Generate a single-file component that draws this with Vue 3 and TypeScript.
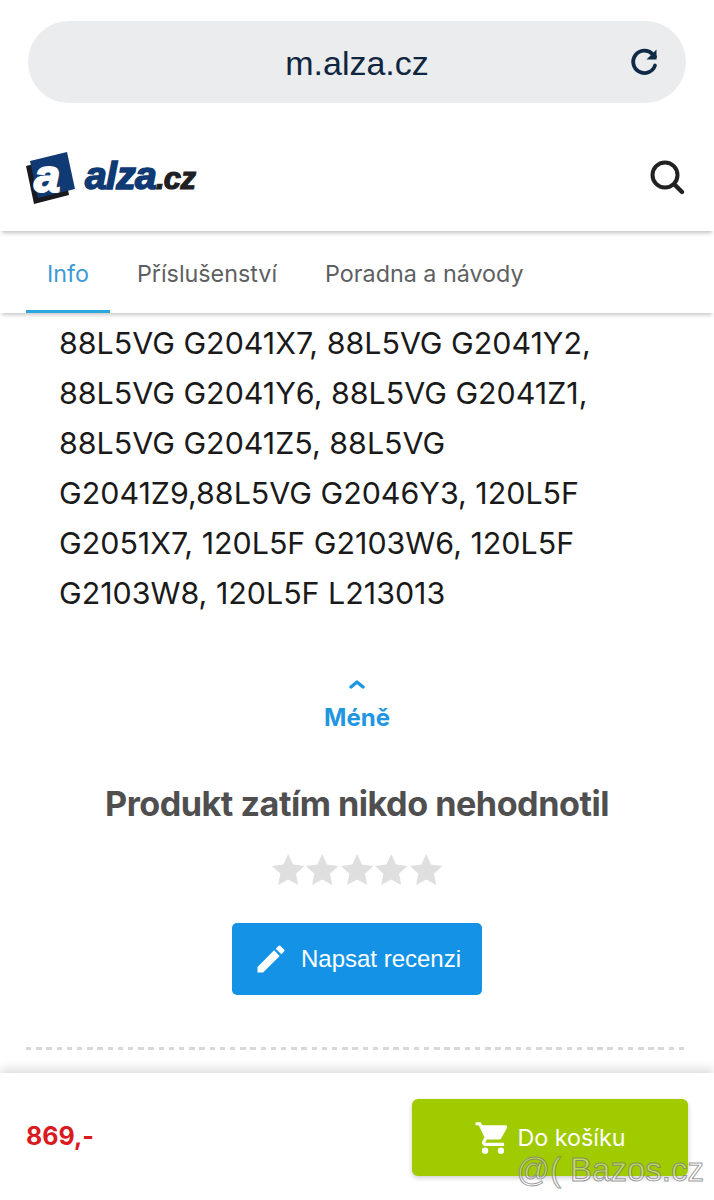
<script setup lang="ts">
const lines = [
  '88L5VG G2041X7, 88L5VG G2041Y2,',
  '88L5VG G2041Y6, 88L5VG G2041Z1,',
  '88L5VG G2041Z5, 88L5VG',
  'G2041Z9,88L5VG G2046Y3, 120L5F',
  'G2051X7, 120L5F G2103W6, 120L5F',
  'G2103W8, 120L5F L213013',
]
const tabs = ['Info', 'Příslušenství', 'Poradna a návody']
const stars = [1, 2, 3, 4, 5]
</script>

<template>
  <div class="page">
    <div class="browser">
      <div class="url-bar">
        <span class="url">m.alza.cz</span>
        <svg class="reload" viewBox="0 0 32 32" width="32" height="32">
          <path d="M26 19.5A11.2 11.2 0 1 1 23.6 8.2L26 10.6" fill="none" stroke="#0f2a47" stroke-width="3.8" stroke-linecap="round" />
          <path d="M27.5 3.5v10h-10z" fill="#0f2a47" />
        </svg>
      </div>
    </div>

    <header class="site-head">
      <div class="logo">
        <svg class="logo-mark" viewBox="0 0 50 52" width="50" height="52">
          <path d="M0 14 36 5 43 43 8 52z" fill="#1a1a1e" />
          <path d="M4 9 41 0 49 37 12 46z" fill="#0f3a74" />
          <text x="8" y="40" class="logo-a">a</text>
        </svg>
        <span class="logo-text">alza<span class="logo-tld">.cz</span></span>
      </div>
      <svg class="search" viewBox="0 0 36 36" width="36" height="36">
        <circle cx="16" cy="16" r="12.5" fill="none" stroke="#222" stroke-width="4" />
        <path d="M25.5 25.5 33 33" stroke="#222" stroke-width="4.4" stroke-linecap="round" />
      </svg>
    </header>

    <nav class="tabs">
      <div v-for="(tab, i) in tabs" :key="tab" class="tab" :class="{ active: i === 0 }">{{ tab }}</div>
    </nav>

    <main class="content">
      <div class="codes">
        <div v-for="line in lines" :key="line">{{ line }}</div>
      </div>

      <div class="less">
        <svg viewBox="0 0 16 10" width="16" height="10">
          <path d="M2 8 8 3l6 5" fill="none" stroke="#1f96e0" stroke-width="3.4" stroke-linecap="round" stroke-linejoin="round" />
        </svg>
        <span>Méně</span>
      </div>

      <h2 class="rating-title">Produkt zatím nikdo nehodnotil</h2>

      <div class="stars">
        <svg v-for="s in stars" :key="s" viewBox="0 0 24 24" width="34.4" height="33">
          <path d="M12 .8l3.5 7.6 8.3 1-6.1 5.7 1.6 8.2-7.3-4.1-7.3 4.1 1.6-8.2L.2 9.4l8.3-1z" fill="#dfdfdf" />
        </svg>
      </div>

      <button class="review-btn">
        <svg viewBox="0 0 24 24" width="36" height="36">
          <path d="M3 17.25V21h3.75L17.81 9.94l-3.75-3.75L3 17.25zM20.71 7.04a1 1 0 0 0 0-1.41l-2.34-2.34a1 1 0 0 0-1.41 0l-1.83 1.83 3.75 3.75 1.83-1.83z" fill="#fff" />
        </svg>
        <span>Napsat recenzi</span>
      </button>

      <div class="dots"></div>
    </main>

    <footer class="buy-bar">
      <span class="price">869,-</span>
      <button class="cart-btn">
        <svg viewBox="0 0 24 24" width="38" height="38">
          <path d="M7 18a2 2 0 1 0 0 4 2 2 0 0 0 0-4zM1 2v2h2l3.6 7.59-1.35 2.45A2 2 0 0 0 7 17h12v-2H7.42a.25.25 0 0 1-.25-.25l.03-.12.9-1.63h7.45c.75 0 1.41-.41 1.75-1.03l3.58-6.49A1 1 0 0 0 20 4H5.21l-.94-2H1zm16 16a2 2 0 1 0 0 4 2 2 0 0 0 0-4z" fill="#fff" />
        </svg>
        <span>Do košíku</span>
      </button>
    </footer>

    <div class="watermark">@( Bazos.cz</div>
  </div>
</template>

<style scoped>
.page {
  position: relative;
  width: 714px;
  height: 1200px;
  overflow: hidden;
  background: #fff;
  display: flex;
  flex-direction: column;
  font-family: Inter, "Liberation Sans", sans-serif;
}

.browser {
  padding: 21px 28px 0;
  height: 131px;
  box-sizing: border-box;
}

.url-bar {
  position: relative;
  height: 82px;
  border-radius: 41px;
  background: #eaecee;
  display: flex;
  align-items: center;
  justify-content: center;
}

.url {
  font-family: "Liberation Sans", Arial, sans-serif;
  font-size: 34px;
  color: #10263f;
  padding-top: 2px;
}

.reload {
  position: absolute;
  right: 25px;
  top: 25px;
}

.site-head {
  height: 100px;
  display: flex;
  align-items: center;
  justify-content: space-between;
  padding: 0 29px 0 26px;
  box-sizing: border-box;
  position: relative;
  z-index: 2;
  background: #fff;
  box-shadow: 0 4px 4px -2px rgba(0, 0, 0, 0.24);
}

.logo {
  display: flex;
  align-items: center;
  gap: 9px;
  margin-top: -7px;
}

.logo-mark {
  overflow: visible;
}

.logo-a {
  font-family: "Liberation Sans", Arial, sans-serif;
  font-weight: 700;
  font-style: italic;
  font-size: 47px;
  fill: #fff;
  stroke: #fff;
  stroke-width: 2px;
}

.logo-text {
  font-family: "Liberation Sans", Arial, sans-serif;
  font-weight: 700;
  font-style: italic;
  font-size: 39px;
  letter-spacing: -0.7px;
  color: #0f3a74;
  -webkit-text-stroke: 1.6px #0f3a74;
  margin-bottom: 3px;
}

.logo-tld {
  font-size: 31px;
  color: #1f2024;
  -webkit-text-stroke: 1.2px #1f2024;
}

.search {
  margin-bottom: 8px;
}

.tabs {
  height: 82px;
  display: flex;
  padding-left: 26px;
  position: relative;
  z-index: 1;
  background: #fff;
  box-shadow: 0 4px 4px -2px rgba(0, 0, 0, 0.22);
}

.tab {
  padding: 0 21px;
  line-height: 85px;
  font-size: 23.3px;
  color: #5d5f61;
  white-space: nowrap;
  box-sizing: border-box;
  height: 82px;
  margin-right: 6px;
}

.tab.active {
  color: #3d9bd6;
  border-bottom: 3px solid #2ba8de;
}

.content {
  flex: 1;
  display: flex;
  flex-direction: column;
  align-items: center;
  padding: 5px 26px 0;
  min-height: 0;
}

.codes {
  align-self: stretch;
  padding-left: 33px;
  font-size: 30.4px;
  line-height: 50px;
  color: #1a1a1a;
  white-space: nowrap;
}

.less {
  margin-top: 61px;
  display: flex;
  flex-direction: column;
  align-items: center;
  gap: 14px;
  font-size: 24px;
  font-weight: 700;
  color: #1f96e0;
}

.rating-title {
  margin: 51px 0 0;
  font-size: 34.2px;
  font-weight: 700;
  color: #4f4f4f;
  letter-spacing: -0.5px;
  white-space: nowrap;
}

.stars {
  margin-top: 29px;
  display: flex;
}

.review-btn {
  margin-top: 37px;
  width: 250px;
  height: 72px;
  border: none;
  border-radius: 5px;
  background: #1493e6;
  color: #fff;
  font-family: "Liberation Sans", Arial, sans-serif;
  font-size: 24px;
  display: flex;
  align-items: center;
  justify-content: center;
  gap: 12px;
}

.dots {
  align-self: stretch;
  margin-top: 52px;
  height: 3px;
  background: repeating-linear-gradient(90deg, #d8d8d8 0 5.5px, transparent 5.5px 10.2px);
}

.buy-bar {
  height: 127px;
  box-sizing: border-box;
  padding: 26px 26px 0;
  display: flex;
  justify-content: space-between;
  background: #fff;
  box-shadow: 0 -4px 10px rgba(0, 0, 0, 0.14);
  position: relative;
}

.price {
  font-family: Inter, "Liberation Sans", sans-serif;
  font-size: 25px;
  font-weight: 700;
  color: #d91a1f;
  margin-top: 22px;
}

.cart-btn {
  width: 276px;
  height: 77px;
  border: none;
  border-radius: 6px;
  background: #a0cb00;
  color: #fff;
  font-family: Inter, sans-serif;
  font-size: 23.3px;
  display: flex;
  align-items: center;
  justify-content: center;
  gap: 5px;
  box-shadow: 0 2px 5px rgba(0, 0, 0, 0.2);
}

.watermark {
  position: absolute;
  right: 10px;
  bottom: 11px;
  font-family: "Liberation Sans", Arial, sans-serif;
  font-size: 33px;
  color: rgba(255, 255, 255, 0.35);
  -webkit-text-stroke: 1px rgba(120, 120, 120, 0.75);
  white-space: nowrap;
}
</style>
